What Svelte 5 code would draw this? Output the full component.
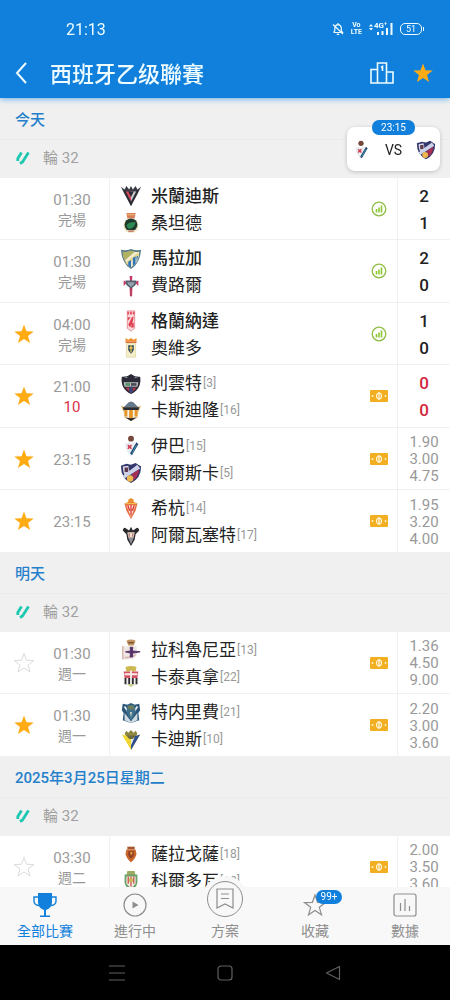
<script>
  const tabs = [
    { id: 'all', label: '全部比賽' },
    { id: 'live', label: '進行中' },
    { id: 'tips', label: '方案' },
    { id: 'saved', label: '收藏', badge: '99+' },
    { id: 'data', label: '數據' }
  ];

  let activeTab = $state('all');

  let days = $state([
    {
      title: '今天',
      round: '輪 32',
      matches: [
        {
          time: '01:30', status: '完場', icon: 'stats', score: [2, 1],
          home: { name: '米蘭迪斯', crest: 'mirandes', won: true },
          away: { name: '桑坦德', crest: 'racing' }
        },
        {
          time: '01:30', status: '完場', icon: 'stats', score: [2, 0],
          home: { name: '馬拉加', crest: 'malaga', won: true },
          away: { name: '費路爾', crest: 'ferrol' }
        },
        {
          time: '04:00', status: '完場', icon: 'stats', score: [1, 0], star: 'on',
          home: { name: '格蘭納達', crest: 'granada', won: true },
          away: { name: '奧維多', crest: 'oviedo' }
        },
        {
          time: '21:00', status: '10', live: true, icon: 'field', score: [0, 0], star: 'on',
          home: { name: '利雲特', crest: 'levante', rank: 3 },
          away: { name: '卡斯迪隆', crest: 'castellon', rank: 16 }
        },
        {
          time: '23:15', icon: 'field', odds: ['1.90', '3.00', '4.75'], star: 'on',
          home: { name: '伊巴', crest: 'eibar', rank: 15 },
          away: { name: '侯爾斯卡', crest: 'huesca', rank: 5 }
        },
        {
          time: '23:15', icon: 'field', odds: ['1.95', '3.20', '4.00'], star: 'on',
          home: { name: '希杭', crest: 'gijon', rank: 14 },
          away: { name: '阿爾瓦塞特', crest: 'albacete', rank: 17 }
        }
      ]
    },
    {
      title: '明天',
      round: '輪 32',
      matches: [
        {
          time: '01:30', status: '週一', icon: 'field', odds: ['1.36', '4.50', '9.00'], star: 'off',
          home: { name: '拉科魯尼亞', crest: 'deportivo', rank: 13 },
          away: { name: '卡泰真拿', crest: 'cartagena', rank: 22 }
        },
        {
          time: '01:30', status: '週一', icon: 'field', odds: ['2.20', '3.00', '3.60'], star: 'on',
          home: { name: '特内里費', crest: 'tenerife', rank: 21 },
          away: { name: '卡迪斯', crest: 'cadiz', rank: 10 }
        }
      ]
    },
    {
      title: '2025年3月25日星期二',
      round: '輪 32',
      matches: [
        {
          time: '03:30', status: '週二', icon: 'field', odds: ['2.00', '3.50', '3.60'], star: 'off',
          home: { name: '薩拉戈薩', crest: 'zaragoza', rank: 18 },
          away: { name: '科爾多瓦', crest: 'cordoba', rank: 12 }
        }
      ]
    }
  ]);

  function toggleStar(match) {
    match.star = match.star === 'on' ? 'off' : 'on';
  }
</script>

{#snippet star(on)}
  <svg class="star" class:on viewBox="0 0 24 24" aria-hidden="true">
    <path d="M12 1.600l2.700 7.400 7.900.3-6.200 4.900 2.200 7.600-6.600-4.400-6.600 4.400 2.200-7.600L1.400 9.300l7.900-.3z" />
  </svg>
{/snippet}

{#snippet crest(id)}
  <svg class="crest" viewBox="0 0 24 24" aria-hidden="true">
    {#if id === 'mirandes'}
      <path d="M1 2l4 3 2-4 3 4 2-4 2 4 3-4 2 4 4-3-4 8-7 13L5 10z" fill="#3a3a44" />
      <path d="M6 7h6v11z" fill="#d8485a" />
      <path d="M12 7h6l-6 11z" fill="#c4c7ce" />
      <path d="M9 7h6l-3 6z" fill="#2b2b33" />
      <path d="M5 6l7 15 7-15" fill="none" stroke="#2b2b33" stroke-width="1.500" />
    {:else if id === 'racing'}
      <path d="M7 1h10l-1 6H8z" fill="#d9805a" />
      <path d="M8 3h8" stroke="#f1c37c" />
      <circle cx="12" cy="15" r="8" fill="#e9dfb8" />
      <circle cx="12" cy="14" r="7" fill="#1d3a2c" />
      <path d="M7 15c3-5 7-3 10-4-1 6-5 8-8 7z" fill="#2f8a55" />
      <path d="M7 20h10l-2 3H9z" fill="#f0ead2" />
      <path d="M9 21h6" stroke="#c94b40" />
    {:else if id === 'malaga'}
      <path d="M1 2q6 1 11-1 5 2 11 1-1 15-11 21Q2 17 1 2z" fill="#5b7d86" />
      <path d="M3 4q5 1 9-1 4 2 9 1 0 12-9 17Q4 16 3 4z" fill="#f3ead0" />
      <path d="M3 4q5 1 9-1l4 1L5 14Q3 9 3 4z" fill="#b2b263" />
      <path d="M20 5L6 16l2 2L21 8z" fill="#e7d98b" />
      <path d="M9 15v4l3 2V13zM14 11v9l3-3V9zM18 9v6l2-6z" fill="#2f74b8" />
    {:else if id === 'ferrol'}
      <path d="M10.500 1h3l-.5 7h-2z" fill="#c43b63" />
      <path d="M11 14h2l-.4 9h-1.200z" fill="#b92f55" stroke="#b92f55" />
      <path d="M4 6l4 2-4 4zM20 6l-4 2 4 4z" fill="#c43b63" />
      <path d="M6 6h12l-1 5-5 4-5-4z" fill="#54606e" />
      <path d="M8 8h8l-1 2-3 3-3-3z" fill="#93a3ac" />
    {:else if id === 'granada'}
      <path d="M8 1h8v19l-4 3-4-3z" fill="#f7dadd" stroke="#e58a93" />
      <path d="M8 2h2v3H8zM11 2h2v3h-2zM14 2h2v3h-2z" fill="#e34f5d" />
      <path d="M9 16l4-8 2-1-1 5-3 7zM8.500 8h3l-3 4zM13 14h2v5h-3z" fill="#e0404f" />
    {:else if id === 'oviedo'}
      <path d="M6 1l3 2 3-2 3 2 3-2v4H6z" fill="#f0922f" />
      <path d="M6 5h12v1.500H6z" fill="#d9622d" />
      <path d="M7 7h10v15H7z" fill="#f4efc9" stroke="#e6dcae" />
      <path d="M9 9h6v5q-1 3-3 4-2-1-3-4z" fill="#28435f" />
      <path d="M12 9v8M10 12h4" stroke="#e8c54c" stroke-width="1.500" />
    {:else if id === 'levante'}
      <path d="M2 4q5 1 10-3 5 4 10 3 2 13-10 19Q0 17 2 4z" fill="#2d2b37" />
      <path d="M5 4l3 1M16 5l3-1" stroke="#8d939c" stroke-width="1.500" />
      <path d="M4 10h16l-1 5H5z" fill="#b9c3bf" />
      <path d="M6 11h5v3H6z" fill="#56906a" />
      <path d="M12 11h6v3h-6z" fill="#4a4d57" />
      <path d="M6 16h4v4zM14 16h4l-4 4z" fill="#c4384e" />
      <path d="M10 15h4v6l-2 1-2-1z" fill="#3e4672" />
    {:else if id === 'castellon'}
      <path d="M1 6l4 2h14l4-2-3 7-1 6-7 4-7-4-1-6z" fill="#d8b16a" />
      <path d="M7 5q5-7 10 0l3 3H4z" fill="#65798c" />
      <path d="M3 8h18l-1 3H4z" fill="#2a2d33" />
      <path d="M5 11h14v7l-7 4-7-4z" fill="#f3efe4" />
      <path d="M5 11h3v7H5zM10 11h4v9h-4zM16 11h3v7h-3z" fill="#e99525" />
      <path d="M6 19l6 4 6-4-6 1z" fill="#25252a" />
    {:else if id === 'eibar'}
      <circle cx="12" cy="4" r="3.200" fill="#75483b" />
      <path d="M5 9l12-1q1 10-5 15-6-5-7-14z" fill="#e9eef3" />
      <path d="M8.500 11l4 4M12.500 11l-4 4" stroke="#d33e54" stroke-width="1.800" />
      <path d="M18 8l2 2-7 12-2-2z" fill="#26446c" />
      <path d="M18 11l-5 9" stroke="#3da0c1" />
    {:else if id === 'huesca'}
      <path d="M1 4l6-2 5 1 5-2 6 4q0 13-11 18Q1 18 1 4z" fill="#34376b" />
      <path d="M3 5l6-1 2 9-5 3Q3 11 3 5z" fill="#d9dbea" />
      <path d="M5 6h4v5H5z" fill="#5e3c50" />
      <path d="M19 3l3 4L5 18l-2-3z" fill="#ccd2e7" />
      <path d="M13 13l8-5q-1 8-6 12z" fill="#a72f56" />
      <circle cx="11" cy="18" r="3.500" fill="#efb84c" />
    {:else if id === 'gijon'}
      <path d="M9 2l3-2 3 2v4H9z" fill="#e8932e" />
      <path d="M5 6q7-4 14 0l-2 8-5 9-5-9z" fill="#e76b3c" />
      <path d="M7 8h10l-5 13z" fill="#fff0dc" />
      <path d="M8.500 8l2 6M12 7v12M15.500 8l-2 6" stroke="#d9363b" stroke-width="1.500" />
      <path d="M6 6h12" stroke="#f0bf48" stroke-width="1.500" />
    {:else if id === 'albacete'}
      <path d="M3 6q1-5 4-2l3 2 2-4 2 4 3-2q3-3 4 2l-4 4-1 6-4 7-4-7-1-6z" fill="#29282c" />
      <path d="M8 8h8l-1 6H9z" fill="#f1ddcb" />
      <path d="M9 14h6l-3 7z" fill="#8f8d97" />
      <path d="M10 9v4M14 9v4" stroke="#8e4c55" />
    {:else if id === 'deportivo'}
      <path d="M7 2q5-3 10 0l-2 5H9z" fill="#c19560" />
      <path d="M9 4h6" stroke="#7c4c3b" stroke-width="1.500" />
      <path d="M2 7q10 2 16 0l1 9q-3 7-8 6l-8 1z" fill="#efe6e6" />
      <path d="M3 8v14M5 20q8 1 12-3" fill="none" stroke="#d4b5a7" stroke-width="1.500" />
      <path d="M11 9h3l-.5 4 8.500 1-8.500 1.500.5 4h-3l.5-4L6 14l5.500-1z" fill="#553067" stroke="#553067" />
    {:else if id === 'cartagena'}
      <path d="M6 1q6-2 12 0l-1 5H7z" fill="#cbb94f" />
      <path d="M4 6h16l-1 7H5z" fill="#d65464" />
      <path d="M12 5v8M5 9h14" stroke="#f8eeee" stroke-width="2" />
      <path d="M4 13h16v6l-8 4-8-4z" fill="#eeeeec" />
      <path d="M5 13h2v7H5zM9 13h2v7H9zM13 13h2v7h-2zM17 13h2v7h-2z" fill="#302d35" />
      <path d="M8 20h8l-4 3z" fill="#c8cf7e" />
    {:else if id === 'tenerife'}
      <path d="M3 2l5 1 4-2 4 2 5-1 1 7-2 3 1 8-9 3-9-3 1-8-2-3z" fill="#2a5578" />
      <path d="M5 12l7 9 7-9v8l-7 3-7-3z" fill="#cfdae2" />
      <path d="M5 5l4 6M19 5l-4 6" stroke="#e8eef2" stroke-width="2" />
      <path d="M8 3h8l1 8-5 10-5-10z" fill="#3e708c" />
      <path d="M9 4h6v4H9z" fill="#6e7f58" />
      <path d="M11 11h2l-1 6z" fill="#e2dfd0" />
    {:else if id === 'cadiz'}
      <path d="M5 5l2-3 2 2 3-3 3 3 2-2 2 3-2 4H7z" fill="#8f8740" />
      <path d="M2 6l10 3 10-3-10 17z" fill="#f1d735" />
      <path d="M12 9l10-3-10 17z" fill="#2d4d91" />
      <path d="M12 10l4-1-4 9z" fill="#e3e8df" />
      <path d="M7 7h10l-3 4h-4z" fill="#6b6a45" />
    {:else if id === 'zaragoza'}
      <path d="M8 4h8v3H8z" fill="#a6552c" />
      <path d="M7 7h10l1 5q-1 5-6 9-5-4-6-9z" fill="#c8662c" />
      <path d="M9 9h6v4q-1 3-3 4-2-1-3-4z" fill="#8e3f29" />
      <path d="M11 10h3l-2 4z" fill="#efae40" />
    {:else}
      <path d="M8 1h8l1 5H7z" fill="#9bab62" />
      <path d="M5 5h14v9q-1 5-7 9-6-4-7-9z" fill="#6da16b" />
      <path d="M7 7h10v8l-5 5-5-5z" fill="#f4efe4" />
      <path d="M9 7v8M12 7v11M15 7v8" stroke="#c75b55" stroke-width="1.500" />
      <path d="M10 9h4v4h-4z" fill="#c9b455" />
    {/if}
  </svg>
{/snippet}

{#snippet team(side)}
  <div class="team" class:won={side.won}>
    {@render crest(side.crest)}
    <span class="name">{side.name}</span>
    {#if side.rank}<span class="rank">[{side.rank}]</span>{/if}
  </div>
{/snippet}

<div class="app">
  <header class="header">
    <div class="status-bar">
      <span class="clock">21:13</span>
      <div class="status-icons">
        <svg width="12" height="14" viewBox="0 0 12 14" aria-hidden="true">
          <path d="M2 10.500h8.500L9.300 8.500V6Q9 3 6 2.700 3.200 3 2.800 6v2.500L1.500 10.500M6 1v1.700M4.800 12.300h2.400M1 2.500l10 9.500" fill="none" stroke="currentColor" stroke-width="1.200" />
        </svg>
        <span class="volte"><span>Vo</span><span>LTE</span></span>
        <span class="signal">
          <span class="network">4G⁺</span>
          <svg width="24" height="14" viewBox="0 0 24 14" aria-hidden="true">
            <path d="M0 4.500L2 2l2 2.500zM0 6l2 2.500L4 6z" fill="currentColor" />
            <path d="M8 10h2v3H8zM12.500 9h2v4h-2zM17 6h2v7h-2zM21.500 1h2v12h-2z" fill="currentColor" />
          </svg>
        </span>
        <span class="battery">51</span>
      </div>
    </div>
    <div class="toolbar">
      <button class="icon-btn" aria-label="返回">
        <svg width="14" height="22" viewBox="0 0 14 22" aria-hidden="true">
          <path d="M12 1L3 11l9 10" fill="none" stroke="currentColor" stroke-width="2" />
        </svg>
      </button>
      <h1>西班牙乙级聯賽</h1>
      <button class="icon-btn" aria-label="排名">
        <svg width="24" height="22" viewBox="0 0 24 22" aria-hidden="true">
          <path d="M7.500 21V1h9v20M7.500 7.500H1V21h22V10h-6.500M11 5.500l1.500-1v4.500" fill="none" stroke="currentColor" stroke-width="1.600" />
        </svg>
      </button>
      <button class="icon-btn" aria-label="收藏聯賽">{@render star(true)}</button>
    </div>
  </header>

  <main class="content">
    {#each days as day}
      <section>
        <h2>{day.title}</h2>
        <div class="round">
          <svg width="14" height="14" viewBox="0 0 14 14" aria-hidden="true">
            <path d="M5.500 1.500L1.800 7.500V10M12.500 1.500L6.500 11 4 12.500" fill="none" stroke="#1cc8b0" stroke-width="2.800" stroke-linejoin="round" />
          </svg>
          {day.round}
        </div>
        <ul>
          {#each day.matches as match}
            <li class="match">
              <div class="fav">
                {#if match.star}
                  <button class="icon-btn" aria-label="收藏" onclick={() => toggleStar(match)}>
                    {@render star(match.star === 'on')}
                  </button>
                {/if}
              </div>
              <div class="when">
                <time>{match.time}</time>
                {#if match.status}<span class="state" class:live={match.live}>{match.status}</span>{/if}
              </div>
              <div class="teams">
                {@render team(match.home)}
                {@render team(match.away)}
              </div>
              <div class="info">
                {#if match.icon === 'stats'}
                  <svg width="16" height="16" viewBox="0 0 16 16" aria-hidden="true">
                    <circle cx="8" cy="8" r="6.800" fill="none" stroke="#90bd45" stroke-width="1.300" />
                    <path d="M5.500 8v3.500M8 6.500v5M10.500 4.500v7" stroke="#8cc832" stroke-width="1.600" />
                  </svg>
                {:else}
                  <svg width="18" height="12" viewBox="0 0 18 12" aria-hidden="true">
                    <rect width="18" height="12" rx="1" fill="#f2af22" />
                    <path d="M9 2v8M2.500 5v2M15.500 5v2" stroke="#fff3d2" stroke-width="1.400" />
                    <ellipse cx="9" cy="6" rx="2.500" ry="2.800" fill="none" stroke="#fff3d2" stroke-width="1.200" />
                  </svg>
                {/if}
              </div>
              {#if match.score}
                <div class="score" class:live={match.live}>
                  {#each match.score as goals}<span>{goals}</span>{/each}
                </div>
              {:else}
                <div class="odds">
                  {#each match.odds as odd}<span>{odd}</span>{/each}
                </div>
              {/if}
            </li>
          {/each}
        </ul>
      </section>
    {/each}
  </main>

  <button class="next-match">
    <span class="kickoff">23:15</span>
    {@render crest('eibar')}
    <span>VS</span>
    {@render crest('huesca')}
  </button>

  <nav class="tabs">
    {#each tabs as tab}
      <button class="tab" class:active={activeTab === tab.id} onclick={() => (activeTab = tab.id)}>
        <span class="tab-icon" class:raised={tab.id === 'tips'}>
          {#if tab.id === 'all'}
            <svg width="24" height="24" viewBox="0 0 24 24" aria-hidden="true">
              <path d="M5 0h14v9q0 6-6 8v5.500h4V24H7v-1.500h4V17q-6-2-6-8z" fill="currentColor" />
              <path d="M5 4H1v4q0 4 5 4.500M19 4h4v4q0 4-5 4.500" fill="none" stroke="currentColor" stroke-width="1.400" />
            </svg>
          {:else if tab.id === 'live'}
            <svg width="24" height="24" viewBox="0 0 24 24" aria-hidden="true">
              <circle cx="12" cy="12" r="11" fill="none" stroke="currentColor" stroke-width="1.200" />
              <path d="M9.500 8.500l6 3.500-6 3.500z" fill="currentColor" />
            </svg>
          {:else if tab.id === 'tips'}
            <svg width="20" height="22" viewBox="0 0 20 22" aria-hidden="true">
              <path d="M2 1h16v19l-8-4-8 4zM6 6h8M6 10.500h8" fill="none" stroke="currentColor" stroke-width="1.200" />
            </svg>
          {:else if tab.id === 'saved'}
            <svg width="24" height="24" viewBox="0 0 24 24" aria-hidden="true">
              <path d="M12 2l2.600 7.300 7.900.3-6.200 4.700 2.200 7.500-6.500-4.300-6.500 4.300 2.200-7.500L1.500 9.600l7.900-.3z" fill="none" stroke="currentColor" stroke-width="1.200" />
            </svg>
          {:else}
            <svg width="24" height="24" viewBox="0 0 24 24" aria-hidden="true">
              <rect x="1" y="1" width="22" height="22" rx="2" fill="none" stroke="currentColor" stroke-width="1.200" />
              <path d="M7.500 10v8M12 6v12M16.500 13v5" stroke="currentColor" stroke-width="1.200" />
            </svg>
          {/if}
          {#if tab.badge}<span class="badge">{tab.badge}</span>{/if}
        </span>
        {tab.label}
      </button>
    {/each}
  </nav>

  <div class="system-bar">
    <button class="icon-btn" aria-label="選單">
      <svg width="16" height="16" viewBox="0 0 16 16" aria-hidden="true">
        <path d="M0 1h16M0 8h16M0 15h16" stroke="currentColor" stroke-width="1.200" />
      </svg>
    </button>
    <button class="icon-btn" aria-label="主畫面">
      <svg width="16" height="16" viewBox="0 0 16 16" aria-hidden="true">
        <rect x="1" y="1" width="14" height="14" rx="3" fill="none" stroke="currentColor" stroke-width="1.200" />
      </svg>
    </button>
    <button class="icon-btn" aria-label="返回上頁">
      <svg width="16" height="16" viewBox="0 0 16 16" aria-hidden="true">
        <path d="M14.500 1.500v13L1.500 8z" fill="none" stroke="currentColor" stroke-width="1.200" stroke-linejoin="round" />
      </svg>
    </button>
  </div>
</div>

<style>
  :global(body) {
    background: #fff;
  }

  .app {
    position: relative;
    display: flex;
    flex-direction: column;
    height: 100vh;
    font-family: Roboto, 'Noto Sans CJK TC', sans-serif;
    color: #222;
  }

  button {
    padding: 0;
    border: 0;
    background: none;
    color: inherit;
    font: inherit;
    cursor: pointer;
  }

  svg {
    display: block;
    flex: none;
  }

  .icon-btn {
    display: grid;
    place-items: center;
  }

  .header {
    position: relative;
    z-index: 1;
    flex: none;
    background: #1080dc;
    color: #eefcff;
    box-shadow: 0 1px 6px #1080dc99;
  }

  .status-bar {
    display: flex;
    align-items: center;
    justify-content: space-between;
    height: 38px;
    padding: 10px 28px 0 66px;
  }

  .clock {
    font-size: 16px;
  }

  .status-icons {
    display: flex;
    align-items: center;
    gap: 7px;
  }

  .volte {
    display: flex;
    flex-direction: column;
    align-items: center;
    font-size: 7px;
    font-weight: 700;
    line-height: 7px;
  }

  .signal {
    position: relative;
  }

  .network {
    position: absolute;
    top: 0;
    left: 5px;
    font-size: 8px;
    font-weight: 700;
    line-height: 8px;
  }

  .battery {
    position: relative;
    width: 20px;
    border: 1px solid currentColor;
    border-radius: 5px;
    font-size: 9px;
    line-height: 10px;
    text-align: center;
  }

  .battery::after {
    content: '';
    position: absolute;
    top: 3px;
    right: -3px;
    width: 1px;
    height: 4px;
    background: currentColor;
  }

  .toolbar {
    display: flex;
    align-items: center;
    gap: 18px;
    height: 50px;
    padding: 0 16px 0 14px;
  }

  h1 {
    flex: 1;
    margin: 0 0 0 4px;
    padding-bottom: 2px;
    font-size: 22px;
    font-weight: 500;
  }

  .star {
    width: 22px;
    height: 22px;
    fill: none;
    stroke: #d8d8d8;
  }

  .star.on {
    fill: #ffab14;
    stroke: none;
  }

  .content {
    flex: 1;
    min-height: 0;
    padding-top: 1px;
    overflow-y: auto;
    scrollbar-width: none;
    background: #f0f0f0;
  }

  h2 {
    margin: 0;
    padding: 2px 15px 0;
    border-bottom: 1px solid #ebebeb;
    color: #2580cb;
    font-size: 15px;
    font-weight: 500;
    line-height: 38px;
  }

  .round {
    display: flex;
    align-items: center;
    gap: 13px;
    height: 36px;
    padding: 0 16px 2px;
    color: #a0a0a0;
    font-size: 15px;
    line-height: 20px;
  }

  ul {
    margin: 0;
    padding: 0;
    list-style: none;
    background: #fff;
  }

  .match {
    display: grid;
    grid-template-columns: 48px 62px 1fr 36px 53px;
    box-sizing: border-box;
    height: 62px;
    border-bottom: 1px solid #f0f0f0;
  }

  .match:nth-child(even) {
    height: 63px;
  }

  .fav,
  .info {
    display: grid;
    place-items: center;
  }

  .when,
  .teams,
  .score,
  .odds {
    display: flex;
    flex-direction: column;
    justify-content: center;
    padding-top: 2px;
  }

  .when {
    align-items: center;
    padding-right: 13px;
    border-right: 1px solid #f0f0f0;
    color: #9a9a9a;
    font-size: 15px;
    line-height: 20px;
  }

  .state {
    font-size: 14px;
  }

  .state.live {
    color: #dc3149;
    font-size: 15px;
  }

  .team {
    display: flex;
    align-items: center;
    height: 27px;
    padding-left: 10px;
    font-size: 17px;
    line-height: 27px;
    white-space: nowrap;
  }

  .won {
    font-weight: 500;
  }

  .crest {
    width: 22px;
    height: 22px;
  }

  .name {
    margin-left: 9px;
  }

  .rank {
    margin-left: 1px;
    color: #999;
    font-size: 12px;
  }

  .score,
  .odds {
    align-items: center;
    border-left: 1px solid #f0f0f0;
  }

  .score {
    font-size: 17px;
    font-weight: 500;
    line-height: 27px;
  }

  .score.live {
    color: #d2283e;
  }

  .odds {
    color: #999;
    font-size: 15px;
    line-height: 17px;
  }

  .next-match {
    position: absolute;
    z-index: 2;
    top: 127px;
    right: 10px;
    display: flex;
    align-items: center;
    justify-content: space-between;
    width: 93px;
    height: 44px;
    padding: 2px 4px 0;
    border-radius: 8px;
    background: #fff;
    box-shadow: 0 1px 4px #0003;
    font-size: 14px;
  }

  .next-match .crest {
    width: 20px;
    height: 20px;
  }

  .kickoff {
    position: absolute;
    top: -7px;
    left: 25px;
    width: 43px;
    border-radius: 7px;
    background: #1080dc;
    color: #fff;
    font-size: 10px;
    line-height: 15px;
  }

  .tabs {
    display: grid;
    grid-template: 58px / repeat(5, 1fr);
    flex: none;
    background: #f8f8f8;
    color: #8e8e8e;
  }

  .tab {
    display: flex;
    flex-direction: column;
    align-items: center;
    justify-content: flex-end;
    gap: 4px;
    padding-bottom: 4px;
    font-size: 14px;
    line-height: 20px;
  }

  .tab.active {
    color: #1080dc;
  }

  .tab-icon {
    position: relative;
    flex: none;
  }

  .raised {
    display: grid;
    place-items: center;
    width: 34px;
    height: 34px;
    margin-top: -12px;
    border: 1px solid currentColor;
    border-radius: 50%;
    background: #f8f8f8;
    box-shadow: 0 0 0 5px #f8f8f8;
  }

  .badge {
    position: absolute;
    top: -3px;
    left: 13px;
    width: 26px;
    border-radius: 7px;
    background: #1080dc;
    color: #fff;
    font-size: 10px;
    line-height: 14px;
  }

  .system-bar {
    display: flex;
    flex: none;
    align-items: center;
    justify-content: center;
    gap: 92px;
    height: 55px;
    background: #000;
    color: #606060;
  }
</style>
